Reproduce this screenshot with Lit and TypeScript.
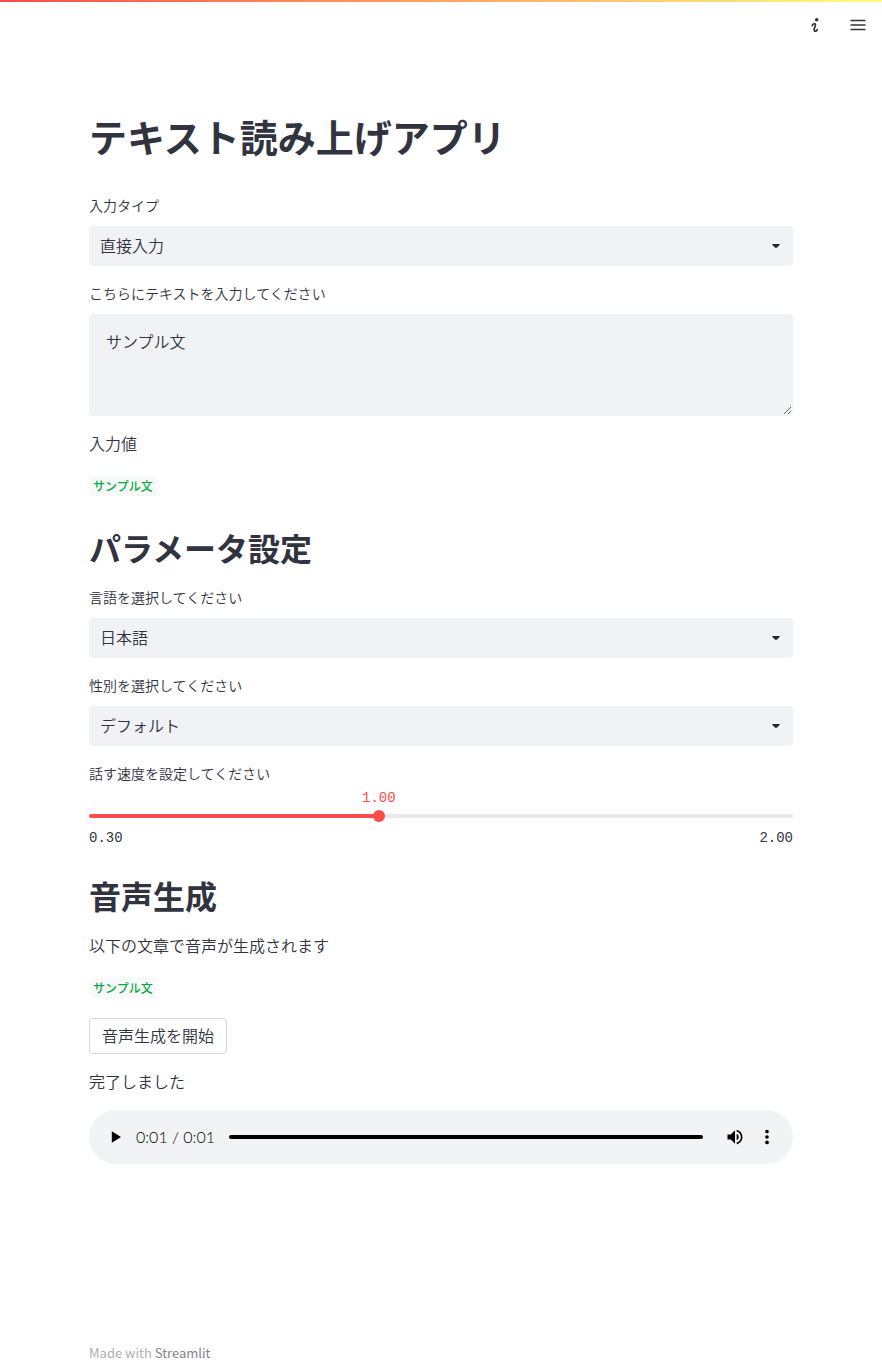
import { LitElement, html, css } from "lit";
import { customElement, property, state } from "lit/decorators.js";

@customElement("select-field")
class SelectField extends LitElement {
  static styles = css`
    :host {
      display: block;
    }
    .label {
      display: block;
      font-size: 14px;
      line-height: 22px;
      margin-bottom: 10px;
    }
    .box {
      display: grid;
      align-items: center;
    }
    .select {
      grid-area: 1 / 1;
      appearance: none;
      width: 100%;
      height: 40px;
      margin: 0;
      padding: 0 40px 2px 11px;
      border: 0;
      border-radius: 4px;
      background: #f0f2f6;
      color: inherit;
      font: inherit;
    }
    .arrow {
      grid-area: 1 / 1;
      justify-self: end;
      width: 8px;
      height: 4px;
      margin-right: 13px;
      pointer-events: none;
      fill: #262730;
    }
  `;

  @property() label = "";
  @property({ attribute: false }) options: string[] = [];

  render() {
    return html`
      <label class="label" for="field">${this.label}</label>
      <div class="box">
        <select class="select" id="field">
          ${this.options.map((o) => html`<option>${o}</option>`)}
        </select>
        <svg class="arrow" viewBox="0 0 8 4" aria-hidden="true">
          <path d="M.6 0h6.8c.5 0 .7.5.4.8L5 3.6c-.6.5-1.400.5-2 0L.2.8C-.1.5.1 0 .6 0Z" />
        </svg>
      </div>
    `;
  }
}

@customElement("speed-slider")
class SpeedSlider extends LitElement {
  static styles = css`
    :host {
      display: block;
    }
    .label {
      display: block;
      font-size: 14px;
      line-height: 22px;
    }
    .slider {
      display: grid;
      font: 14px/16px "Liberation Mono", monospace;
      padding: 6px 0 2px;
    }
    .value {
      justify-self: start;
      transform: translateX(-50%);
      color: #ff4b4b;
    }
    .track {
      grid-area: 2 / 1;
      align-self: center;
      height: 4px;
      border-radius: 4px;
      background: #e6e8ef;
      overflow: hidden;
    }
    .fill {
      height: 100%;
      background: #ff4b4b;
    }
    .range {
      grid-area: 2 / 1;
      appearance: none;
      height: 12px;
      width: auto;
      margin: 4px -6px;
      background: none;
    }
    .range::-webkit-slider-thumb {
      appearance: none;
      width: 12px;
      height: 12px;
      border-radius: 50%;
      background: #ff4b4b;
    }
    .ticks {
      display: flex;
      justify-content: space-between;
      margin-top: 4px;
    }
  `;

  @property() label = "";
  @property({ type: Number }) min = 0.3;
  @property({ type: Number }) max = 2;
  @state() value = 1;

  private onInput(e: Event) {
    this.value = Number((e.target as HTMLInputElement).value);
  }

  render() {
    const pct = ((this.value - this.min) / (this.max - this.min)) * 100;
    return html`
      <label class="label" for="range">${this.label}</label>
      <div class="slider">
        <output class="value" for="range" style="margin-left:${pct}%">${this.value.toFixed(2)}</output>
        <div class="track"><div class="fill" style="width:${pct}%"></div></div>
        <input
          class="range"
          id="range"
          type="range"
          min=${this.min}
          max=${this.max}
          step="0.01"
          .value=${String(this.value)}
          @input=${this.onInput}
        />
        <div class="ticks">
          <span>${this.min.toFixed(2)}</span><span>${this.max.toFixed(2)}</span>
        </div>
      </div>
    `;
  }
}

@customElement("audio-player")
class AudioPlayer extends LitElement {
  static styles = css`
    :host {
      display: flex;
      align-items: center;
      height: 54px;
      padding: 0 10px 0 11px;
      box-sizing: border-box;
      border-radius: 27px;
      background: #f1f3f4;
      color: #000;
    }
    .btn {
      display: grid;
      place-items: center;
      width: 32px;
      height: 32px;
      padding: 0;
      border: 0;
      background: none;
    }
    .icon {
      width: 20px;
      height: 20px;
    }
    .time {
      margin: 0 14px 0 4px;
      font: 300 16px/20px Lato, sans-serif;
      white-space: nowrap;
    }
    .bar {
      flex: 1;
      height: 4px;
      margin-right: 16px;
      border-radius: 2px;
      background: #000;
    }
  `;

  render() {
    return html`
      <button class="btn" aria-label="再生">
        <svg class="icon" viewBox="0 0 24 24"><path d="M7 5v14l11-7z" /></svg>
      </button>
      <span class="time">0:01 / 0:01</span>
      <div class="bar"></div>
      <button class="btn" aria-label="音量">
        <svg class="icon" viewBox="0 0 24 24">
          <path
            d="M3 9v6h4l5 5V4L7 9H3zm13.5 3A4.500 4.500 0 0 0 14 7.970v8.050c1.480-.73 2.500-2.250 2.500-4.020zM14 3.230v2.060c2.890.86 5 3.540 5 6.710s-2.110 5.850-5 6.710v2.060c4.010-.91 7-4.490 7-8.770s-2.990-7.860-7-8.770z"
          />
        </svg>
      </button>
      <button class="btn" aria-label="その他">
        <svg class="icon" viewBox="0 0 24 24">
          <circle cx="12" cy="5.500" r="2.200" />
          <circle cx="12" cy="12" r="2.200" />
          <circle cx="12" cy="18.500" r="2.200" />
        </svg>
      </button>
    `;
  }
}

@customElement("app-root")
class AppRoot extends LitElement {
  static styles = css`
    :host {
      display: flex;
      flex-direction: column;
      min-height: 100vh;
      background: #fff;
      color: #31333f;
      font: 350 16px/24px "Noto Sans CJK JP", sans-serif;
    }
    .stripe {
      height: 2px;
      background: linear-gradient(90deg, #ff4b4b, #fffd80);
    }
    .header {
      display: flex;
      justify-content: flex-end;
      gap: 19px;
      padding: 11px 12px 13px;
    }
    .tool {
      display: grid;
      place-items: center;
      width: 24px;
      height: 24px;
      padding: 0;
      border: 0;
      background: none;
      color: #31333f;
    }
    .page {
      flex: 1;
      display: flex;
      flex-direction: column;
      gap: 16px;
      width: 100%;
      max-width: 736px;
      box-sizing: border-box;
      margin: 0 auto;
      padding: 46px 16px 150px;
    }
    .title {
      margin: 0;
      padding: 18px 0 20px;
      font-size: 38px;
      line-height: 44px;
      font-weight: 700;
    }
    .section {
      margin: 0;
      padding: 11px 0 3px;
      font-size: 32px;
      line-height: 40px;
      font-weight: 700;
    }
    .label {
      display: block;
      margin-bottom: 10px;
      font-size: 14px;
      line-height: 22px;
    }
    .area {
      display: block;
      width: 100%;
      height: 102px;
      box-sizing: border-box;
      margin: 0;
      padding: 14px 16px;
      border: 1px solid #f0f2f6;
      border-radius: 4px;
      background: #f0f2f6;
      color: inherit;
      font: inherit;
      resize: vertical;
    }
    .text {
      margin: 0;
      padding-bottom: 2px;
      line-height: 22px;
    }
    .sample {
      display: flex;
      align-items: center;
      height: 28px;
      margin: 0;
    }
    .code {
      padding: 0 4px;
      border-radius: 4px;
      background: #f8f9fb;
      color: #09ab3b;
      font: 500 12px/20px "Noto Sans CJK JP", sans-serif;
    }
    .start {
      align-self: flex-start;
      height: 36px;
      padding: 0 12px 2px;
      border: 1px solid #d6d6d9;
      border-radius: 4px;
      background: #fff;
      color: inherit;
      font: inherit;
    }
    .footer {
      width: 100%;
      max-width: 736px;
      box-sizing: border-box;
      margin: 0 auto;
      padding: 0 16px 8px;
      font-size: 13px;
      line-height: 20px;
      font-weight: 400;
      color: #adaeb2;
    }
    .link {
      color: #83848c;
      text-decoration: none;
    }
  `;

  @state() text = "サンプル文";

  private onText(e: Event) {
    this.text = (e.target as HTMLTextAreaElement).value;
  }

  render() {
    return html`
      <div class="stripe"></div>
      <header class="header">
        <button class="tool" aria-label="情報">
          <svg width="10" height="16" viewBox="0 0 10 16">
            <circle cx="6.700" cy="2.700" r="1.800" fill="currentColor" />
            <path
              d="M2.200 8.700C2.400 6.900 5.800 5.400 5.400 8.300C5.200 9.600 4.100 11.200 4.100 12.600C4.100 14.800 6.800 14.400 7.200 12.700"
              fill="none"
              stroke="currentColor"
              stroke-width="1.700"
              stroke-linecap="round"
            />
          </svg>
        </button>
        <button class="tool" aria-label="メニュー">
          <svg width="16" height="12" viewBox="0 0 16 12">
            <path d="M.5 1.500h15M.5 6h15M.5 10.500h15" stroke="currentColor" stroke-width="1.500" />
          </svg>
        </button>
      </header>
      <main class="page">
        <h1 class="title">テキスト読み上げアプリ</h1>
        <select-field label="入力タイプ" .options=${["直接入力"]}></select-field>
        <div>
          <label class="label" for="text">こちらにテキストを入力してください</label>
          <textarea class="area" id="text" .value=${this.text} @input=${this.onText}></textarea>
        </div>
        <p class="text">入力値</p>
        <p class="sample"><code class="code">${this.text}</code></p>
        <h2 class="section">パラメータ設定</h2>
        <select-field label="言語を選択してください" .options=${["日本語"]}></select-field>
        <select-field label="性別を選択してください" .options=${["デフォルト"]}></select-field>
        <speed-slider label="話す速度を設定してください"></speed-slider>
        <h2 class="section">音声生成</h2>
        <p class="text">以下の文章で音声が生成されます</p>
        <p class="sample"><code class="code">${this.text}</code></p>
        <button class="start">音声生成を開始</button>
        <p class="text">完了しました</p>
        <audio-player></audio-player>
      </main>
      <footer class="footer">Made with <a class="link" href="#">Streamlit</a></footer>
    `;
  }
}
